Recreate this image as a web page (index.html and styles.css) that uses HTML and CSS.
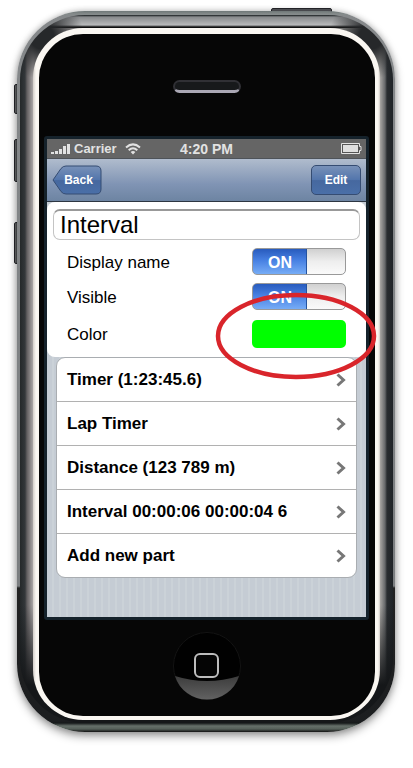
FILE: index.html
```html
<!DOCTYPE html>
<html lang="en">
<head>
<meta charset="utf-8">
<meta name="viewport" content="width=device-width, initial-scale=1">
<title>Interval</title>
<link rel="stylesheet" href="styles.css">
</head>
<body>
<main class="phone">
  <i class="key key-power"></i>
  <i class="key key-mute"></i>
  <i class="key key-up"></i>
  <i class="key key-down"></i>
  <div class="case">
    <div class="metal">
      <div class="ring">
        <div class="face">
          <div class="speaker"></div>
          <div class="screen">
            <div class="status">
              <div class="carrier">
                <svg width="19" height="12" viewBox="0 0 19 12" fill="#e2e2e2" aria-hidden="true"><path d="M0 9h3v2H0zM4 8h3v3H4zM8 6h3v5H8zM12 3h3v8h-3zM16 1h3v10h-3z"/></svg>
                <span>Carrier</span>
                <svg class="wifi" width="16" height="12" viewBox="0 0 16 12" fill="none" stroke="#e2e2e2" stroke-width="2" aria-hidden="true"><path d="M1 4.5Q8 -1.8 15 4.5M3.700 7.200Q8 3.400 12.300 7.200"/><path d="M5.600 8.900Q8 7 10.400 8.900L8 11.500z" fill="#e2e2e2" stroke="none"/></svg>
              </div>
              <span class="clock">4:20 PM</span>
              <svg class="battery" width="21" height="11" viewBox="0 0 21 11" aria-hidden="true"><path d="M.5.5h18v3h1.500v4h-1.500v3H.5z" fill="#555" stroke="#e2e2e2"/><path d="M2 2h15v7H2z" fill="#dedede"/></svg>
            </div>
            <header class="nav">
              <button class="back" type="button">
                <svg width="50" height="30" viewBox="0 0 50 30" aria-hidden="true">
                  <defs><linearGradient id="blue" x1="0" y1="0" x2="0" y2="1"><stop offset="0" stop-color="#7891b8"/><stop offset=".5" stop-color="#5275ac"/><stop offset=".52" stop-color="#46689f"/><stop offset="1" stop-color="#4a6fa8"/></linearGradient></defs>
                  <path d="M1 15 9 3.500Q11 1 14 1H44Q49 1 49 6V24Q49 29 44 29H14Q11 29 9 26.500Z" fill="url(#blue)" stroke="#354c72" stroke-width="1"/>
                </svg>
                <span>Back</span>
              </button>
              <button class="edit" type="button">Edit</button>
            </header>
            <div class="content">
              <form class="panel">
                <input class="name" type="text" value="Interval" aria-label="Name">
                <div class="row">
                  <label for="display">Display name</label>
                  <span class="switch"><input id="display" type="checkbox" checked><b>ON</b></span>
                </div>
                <div class="row">
                  <label for="visible">Visible</label>
                  <span class="switch"><input id="visible" type="checkbox" checked><b>ON</b></span>
                </div>
                <div class="row row-color">
                  <label for="color">Color</label>
                  <span class="swatch">
                    <input id="color" type="color" value="#00ff00">
                    <svg class="marker" width="162" height="90" viewBox="0 0 162 90" aria-hidden="true"><ellipse cx="81" cy="45" rx="78" ry="41" fill="none" stroke="#d9252b" stroke-width="4.500"/></svg>
                  </span>
                </div>
              </form>
              <nav class="list">
                <a href="#timer">Timer (1:23:45.6)<svg width="10" height="14" viewBox="0 0 10 14"><path d="M1.500 1.500 7.500 7l-6 5.500"/></svg></a>
                <a href="#lap">Lap Timer<svg width="10" height="14" viewBox="0 0 10 14"><path d="M1.500 1.500 7.500 7l-6 5.500"/></svg></a>
                <a href="#distance">Distance (123 789 m)<svg width="10" height="14" viewBox="0 0 10 14"><path d="M1.500 1.500 7.500 7l-6 5.500"/></svg></a>
                <a href="#interval">Interval 00:00:06 00:00:04 6<svg width="10" height="14" viewBox="0 0 10 14"><path d="M1.500 1.500 7.500 7l-6 5.500"/></svg></a>
                <a href="#add">Add new part<svg width="10" height="14" viewBox="0 0 10 14"><path d="M1.500 1.500 7.500 7l-6 5.500"/></svg></a>
              </nav>
            </div>
          </div>
          <button class="home" type="button" aria-label="Home">
            <svg width="68" height="68" viewBox="0 0 68 68">
              <defs><linearGradient id="shine" x1="0" y1="0" x2="0" y2="1"><stop offset="0" stop-color="#3c3c3c"/><stop offset="1" stop-color="#626262"/></linearGradient></defs>
              <circle cx="34" cy="34" r="33.500" fill="#010101" stroke="#131313"/>
              <path d="M2 44Q34 54 66 44A33.500 33.500 0 0 1 2 44Z" fill="url(#shine)"/>
              <rect x="22" y="22" width="23" height="23" rx="5" fill="#050505" stroke="#bcbcbc" stroke-width="2"/>
            </svg>
          </button>
        </div>
      </div>
    </div>
  </div>
</main>
</body>
</html>
```
FILE: styles.css
```css
* { box-sizing: border-box; }
body {
  margin: 0;
  background: #fff;
  font-family: "Liberation Sans", Arial, sans-serif;
  color: #000;
}
button { margin: 0; padding: 0; border: 0; background: none; font: inherit; }
svg { display: block; }

.phone {
  position: relative;
  max-width: 440px;
  margin: 0 auto;
  padding: 11px 18px 36px 17px;
}
.case {
  position: relative;
  padding: 4px 2px 9px 3px;
  border-radius: 68px;
  background:
    linear-gradient(#6f7777, #858b8b 3px, transparent 5px),
    linear-gradient(transparent 710px, #16191a 712px, #66706a 715px, #56605a 718px, #111 721px),
    linear-gradient(#86898b, #7b7e80 575px, #222 577px, #1b1d1f);
  box-shadow: 0 4px 10px rgba(0, 0, 0, .38), 0 0 6px rgba(0, 0, 0, .2);
}
.metal {
  padding: 13px 13px 3px;
  border-radius: 65px;
  background:
    radial-gradient(circle at 22px 22px, #26282a 12px, transparent 42px),
    radial-gradient(circle at calc(100% - 22px) 22px, #26282a 12px, transparent 42px),
    linear-gradient(#15191b, #888a8c 2px, #b9babb 10px, #101010 12px) center top / calc(100% - 56px) 13px no-repeat,
    linear-gradient(transparent 590px, #151719 670px),
    linear-gradient(90deg, #24282a, #33373a 5px, #625f61 7px, #aaa6a6 13px, #888 50%, #aaa8a5 calc(100% - 13px), #66686a calc(100% - 8px), #292d30 calc(100% - 6px), #202428);
}
.ring {
  padding: 6px 5px 4px 6px;
  border-radius: 50px;
  background: linear-gradient(90deg, #d2cdc8, #faf7f2 3px, #faf7f2 calc(100% - 2px), #d2cdc8);
}
.face {
  display: flex;
  flex-direction: column;
  align-items: center;
  padding: 46px 6px 16px 5px;
  border-radius: 44px;
  background: #060606;
}
.key {
  position: absolute;
  left: 14px;
  width: 5px;
  border: 1px solid #25272b;
  border-radius: 2px;
  background: linear-gradient(90deg, #777, #33373b);
}
.key-mute { top: 84px; height: 30px; }
.key-up { top: 139px; height: 43px; }
.key-down { top: 222px; height: 42px; }
.key-power { top: 8px; right: 81px; left: auto; width: 61px; height: 6px; background: #55565b; }

.speaker {
  width: 68px;
  height: 13px;
  border: 2px solid #303035;
  border-bottom: 3px solid #aaa7b4;
  border-radius: 7px;
  background: #17191b;
}
.screen {
  width: 100%;
  margin-top: 43px;
  border: 3px solid #15222b;
  border-radius: 3px;
}

.status {
  display: grid;
  grid-template-columns: 1fr auto 1fr;
  align-items: center;
  height: 20px;
  padding: 0 4px;
  background: #656565;
  border-bottom: 1px solid #4e5359;
  color: #e2e2e2;
  font-size: 13px;
  font-weight: bold;
}
.carrier { display: flex; align-items: center; gap: 4px; }
.clock { font-size: 14px; }
.wifi { margin-left: 4px; }
.battery { justify-self: end; }

.nav {
  display: flex;
  justify-content: space-between;
  align-items: center;
  height: 43px;
  padding: 0 5px;
  border-bottom: 1px solid #2d3642;
  background: linear-gradient(#b0bccd, #8094b4 60%, #6d84a2);
  color: #fff;
  font-size: 12px;
  font-weight: bold;
  text-shadow: 0 -1px 0 rgba(0, 0, 0, .5);
}
.nav button { color: #fff; height: 30px; }
.back { display: grid; align-items: center; }
.back > * { grid-area: 1 / 1; }
.back span { padding-left: 3px; }
.edit {
  width: 50px;
  border: 1px solid #354c72;
  border-radius: 5px;
  background: linear-gradient(#7891b8, #5275ac 50%, #46689f 52%, #4a6fa8);
}

.content {
  padding-bottom: 39px;
  background: repeating-linear-gradient(90deg, #c5ccd4 0, #c5ccd4 5px, #cbd2d8 5px, #cbd2d8 7px);
}
.panel {
  display: flex;
  flex-direction: column;
  gap: 8px;
  height: 155px;
  padding: 7px 6px 0;
  border-radius: 8px;
  background: #fff;
}
.name {
  width: 100%;
  height: 31px;
  padding: 0 6px;
  border: 1px solid #c4c4c4;
  border-top: 2px solid #999;
  border-radius: 7px;
  background: #fff;
  font: 24px "Liberation Sans", Arial, sans-serif;
  color: #000;
}
.row {
  display: flex;
  justify-content: space-between;
  align-items: center;
  height: 27px;
  padding: 0 14px;
  font-size: 17px;
}
.row label { padding-top: 2px; }
.row-color { margin-top: 2px; }
.switch { display: grid; width: 94px; height: 27px; }
.switch > * { grid-area: 1 / 1; }
.switch input {
  appearance: none;
  width: 94px;
  height: 27px;
  margin: 0;
  border: 1px solid #999;
  border-radius: 5px;
  background:
    linear-gradient(#d0d0d0, #eee 50%, #fafafa) right / 38px 100% no-repeat,
    linear-gradient(90deg, #24539f, #24539f) 53px 0 / 2px 100% no-repeat,
    linear-gradient(#285bbd, #4780e2 45%, #76acf6);
}
.switch b {
  align-self: center;
  padding: 2px 0 0 16px;
  color: #fff;
  font-size: 16px;
  pointer-events: none;
}
.swatch { position: relative; width: 94px; height: 28px; }
.swatch input {
  display: block;
  appearance: none;
  width: 94px;
  height: 28px;
  padding: 0;
  border: 0;
  border-radius: 5px;
  background: #0f0;
  overflow: hidden;
}
.swatch input::-webkit-color-swatch-wrapper { padding: 0; }
.swatch input::-webkit-color-swatch { border: 0; }
.marker { position: absolute; top: -29px; left: -37px; pointer-events: none; }

.list {
  margin: 0 9px;
  border: 1px solid #a9adb1;
  border-radius: 9px;
  background: #fff;
}
.list a {
  display: flex;
  justify-content: space-between;
  align-items: center;
  height: 44px;
  padding: 0 10px;
  border-bottom: 1px solid #b1b1b1;
  color: #000;
  font-size: 17px;
  font-weight: bold;
  text-decoration: none;
}
.list a:last-child { height: 43px; border-bottom: 0; }
.list svg { fill: none; stroke: #777; stroke-width: 3; }

.home { margin-top: 12px; }
```
